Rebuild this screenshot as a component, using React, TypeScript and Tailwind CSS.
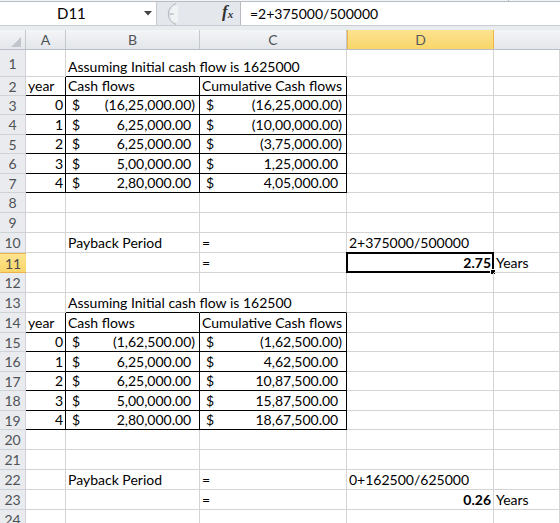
import React from "react";

type Cell = {
  t?: string;
  right?: boolean;
  bold?: boolean;
  acct?: string;
  neg?: boolean;
  spill?: boolean;
};

const H: Record<number, string> = { 27: "h-[27px]", 19: "h-[19px]", 20: "h-[20px]" };
const heights = [27, 19, 19, 20, 19, 20, 19, 20, 20, 20, 20, 20, 20, 20, 19, 20, 19, 20, 19, 20, 20, 20, 20, 20];
const widths = ["w-[40px]", "w-[134px]", "w-[147px]", "w-[147px]", "flex-1"];
const letters = ["A", "B", "C", "D"];

const txt = (t: string): Cell => ({ t });
const num = (t: string): Cell => ({ t, right: true });
const pos = (v: string): Cell => ({ acct: v });
const neg = (v: string): Cell => ({ acct: v, neg: true });

const data: Record<number, Cell[]> = {
  1: [{}, { t: "Assuming Initial cash flow is 1625000", spill: true }],
  2: [txt("year"), txt("Cash flows"), txt("Cumulative Cash flows")],
  3: [num("0"), neg("(16,25,000.00)"), neg("(16,25,000.00)")],
  4: [num("1"), pos("6,25,000.00"), neg("(10,00,000.00)")],
  5: [num("2"), pos("6,25,000.00"), neg("(3,75,000.00)")],
  6: [num("3"), pos("5,00,000.00"), pos("1,25,000.00")],
  7: [num("4"), pos("2,80,000.00"), pos("4,05,000.00")],
  10: [{}, txt("Payback Period"), txt("="), txt("2+375000/500000")],
  11: [{}, {}, txt("="), { t: "2.75", right: true, bold: true }, txt("Years")],
  13: [{}, { t: "Assuming Initial cash flow is 162500", spill: true }],
  14: [txt("year"), txt("Cash flows"), txt("Cumulative Cash flows")],
  15: [num("0"), neg("(1,62,500.00)"), neg("(1,62,500.00)")],
  16: [num("1"), pos("6,25,000.00"), pos("4,62,500.00")],
  17: [num("2"), pos("6,25,000.00"), pos("10,87,500.00")],
  18: [num("3"), pos("5,00,000.00"), pos("15,87,500.00")],
  19: [num("4"), pos("2,80,000.00"), pos("18,67,500.00")],
  22: [{}, txt("Payback Period"), txt("="), txt("0+162500/625000")],
  23: [{}, {}, txt("="), { t: "0.26", right: true, bold: true }, txt("Years")],
};

// black table borders: header row h, data rows h+1..h+5
const tables = [2, 14];
function blackRight(row: number, col: number) {
  return tables.some((h) => row >= h && row <= h + 5 && col <= 2);
}
function blackBottom(row: number, col: number) {
  return tables.some(
    (h) => (row === h - 1 && (col === 1 || col === 2)) || (row >= h && row <= h + 5 && col <= 2)
  );
}

function CellView({ cell, row, col }: { cell: Cell; row: number; col: number }) {
  const rc = cell.spill ? "border-r-white" : blackRight(row, col) ? "border-r-black" : "border-r-[#d4d4d4]";
  const bc = blackBottom(row, col) ? "border-b-black" : "border-b-[#d4d4d4]";
  const selected = row === 11 && col === 3;
  return (
    <div
      className={`${widths[col]} shrink-0 relative flex items-end border-r border-b ${rc} ${bc} pb-[1px] whitespace-nowrap ${
        cell.right ? "justify-end pr-[2px]" : "pl-[2px]"
      } ${cell.bold ? "font-bold" : ""}`}
    >
      {cell.acct ? (
        <div className="flex w-full justify-between pl-[4px] pr-[4px]">
          <span>$</span>
          <span>
            {cell.acct}
            {!cell.neg && <span className="invisible">)</span>}
          </span>
        </div>
      ) : (
        <span className={cell.spill ? "relative z-10" : ""}>{cell.t}</span>
      )}
      {selected && (
        <div className="absolute -left-[1px] -top-[1px] -right-[1px] -bottom-[1px] border-2 border-black">
          <div className="absolute -right-[4px] -bottom-[4px] w-[6px] h-[6px] bg-black border border-white" />
        </div>
      )}
    </div>
  );
}

function FormulaBar() {
  return (
    <div className="h-[30px] bg-[#e4e7eb] flex flex-col">
      <div className="h-[2px] bg-[#f3f4f6] border-b border-[#b7bcc3] relative">
        <div className="absolute left-[508px] top-0 h-[2px] w-px bg-[#b7bcc3]" />
      </div>
      <div className="flex h-[23px]">
        <div className="w-[157px] bg-white border-r border-[#c7cbd1] flex items-center relative">
          <span className="absolute left-[57px] text-[15px] text-black">D11</span>
          <svg className="absolute left-[144px] top-[9px]" width="8" height="5" viewBox="0 0 8 5">
            <path d="M0 0 H8 L4 4.5 Z" fill="#444" />
          </svg>
        </div>
        <div className="w-[83px] flex items-center relative">
          <svg className="absolute left-[1px] top-[1px]" width="20" height="22" viewBox="0 0 20 22">
            <path d="M18 0.5 A11 11 0 0 0 18 21.5" fill="none" stroke="#b3b8bf" strokeWidth="1" />
            <path d="M18 2.5 A9 9 0 0 0 18 19.5 L20 19.5 L20 2.5 Z" fill="#f1f2f4" />
            <rect x="10" y="10" width="6" height="2" rx="1" fill="#c9cdd3" />
          </svg>
          <span className="absolute left-[65px] top-[1px] font-['Liberation_Serif',serif] italic font-bold text-[17px] text-[#333]">
            f<span className="text-[11px] align-[-1px]">x</span>
          </span>
        </div>
        <div className="flex-1 bg-white border-l border-[#b7bcc3] flex items-center pl-[9px] text-[14px] text-black">
          =2+375000/500000
        </div>
      </div>
      <div className="flex-1 border-t border-[#c9cdd2] bg-[#e9ecef]" />
    </div>
  );
}

function ColumnHeader() {
  return (
    <div className="flex h-[20px] border-b border-[#b9bec6]">
      <div className="w-[26px] shrink-0 bg-gradient-to-b from-[#f4f5f7] to-[#e3e6ea] border-r border-[#c5c9cf] relative">
        <svg className="absolute left-[11px] top-[7px]" width="10" height="10" viewBox="0 0 10 10">
          <path d="M10 0 V10 H0 Z" fill="#c1c6cd" />
        </svg>
      </div>
      {letters.map((l, i) =>
        l === "D" ? (
          <div
            key={l}
            className={`${widths[i]} shrink-0 flex items-center justify-center bg-gradient-to-b from-[#fde38f] to-[#f9d66a] border-x border-[#efb447] text-[#5a5a5a]`}
          >
            {l}
          </div>
        ) : (
          <div
            key={l}
            className={`${widths[i]} shrink-0 flex items-center justify-center bg-gradient-to-b from-[#f4f5f7] to-[#e3e6ea] border-r border-[#c5c9cf] text-[#4f5257]`}
          >
            {l}
          </div>
        )
      )}
      <div className="flex-1 bg-gradient-to-b from-[#f4f5f7] to-[#e3e6ea]" />
    </div>
  );
}

export default function App() {
  return (
    <div className="w-[560px] h-[523px] overflow-hidden bg-white text-[14px] text-black font-['Lato','Noto_Sans',sans-serif] leading-[17px]">
      <FormulaBar />
      <ColumnHeader />
      {heights.map((h, idx) => {
        const row = idx + 1;
        const cells = data[row] || [];
        return (
          <div key={row} className={`flex ${H[h]}`}>
            {row === 11 ? (
              <div className="w-[26px] shrink-0 flex items-center justify-center bg-gradient-to-b from-[#fde38f] to-[#f9d66a] border-y border-[#efb447] text-[#4a4a4a]">
                {row}
              </div>
            ) : (
              <div className="w-[26px] shrink-0 flex items-center justify-center bg-[#e9ebee] border-b border-r border-[#cfd3d8] text-[#4f5257]">
                {row}
              </div>
            )}
            {widths.map((_, col) => (
              <CellView key={col} cell={cells[col] || {}} row={row} col={col} />
            ))}
          </div>
        );
      })}
    </div>
  );
}
